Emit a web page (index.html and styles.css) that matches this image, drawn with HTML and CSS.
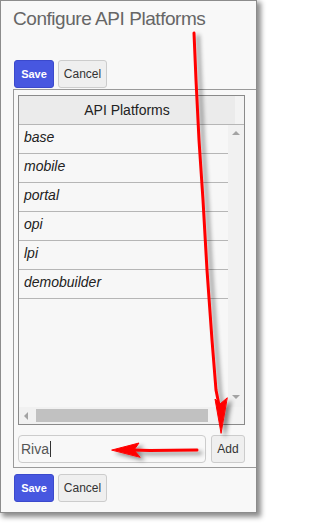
FILE: index.html
```html
<!DOCTYPE html>
<html>
<head>
<meta charset="utf-8">
<link rel="stylesheet" href="styles.css">
</head>
<body>
<div class="window">
  <h1 class="title">Configure API Platforms</h1>
  <div class="toolbar">
    <button class="btn primary">Save</button>
    <button class="btn">Cancel</button>
  </div>
  <div class="panel">
    <div class="grid">
      <div class="grid-head">
        <div class="head-cell">API Platforms</div>
        <div class="head-gap"></div>
      </div>
      <div class="grid-main">
        <div class="rows">
          <div class="row">base</div>
          <div class="row">mobile</div>
          <div class="row">portal</div>
          <div class="row">opi</div>
          <div class="row">lpi</div>
          <div class="row">demobuilder</div>
        </div>
        <div class="vscroll">
          <span class="arrow up"></span>
          <span class="arrow down"></span>
        </div>
      </div>
      <div class="grid-foot">
        <div class="hscroll">
          <span class="arrow left"></span>
          <span class="thumb"></span>
        </div>
        <div class="corner"></div>
      </div>
    </div>
    <div class="add-row">
      <div class="input">Riva<span class="caret"></span></div>
      <button class="btn add">Add</button>
    </div>
  </div>
  <div class="toolbar bottom">
    <button class="btn primary">Save</button>
    <button class="btn">Cancel</button>
  </div>
</div>
<svg class="annot" width="270" height="525" viewBox="0 0 270 525">
  <defs>
    <filter id="sh" x="-50%" y="-50%" width="200%" height="200%">
      <feDropShadow dx="4" dy="3" stdDeviation="2.2" flood-color="#000" flood-opacity="0.45"/>
    </filter>
  </defs>
  <g filter="url(#sh)" fill="#ff0000" stroke="#ff0000" stroke-linecap="round" stroke-linejoin="round">
    <path d="M194 33 L196 80 L199 140 L203 200 L207 270 L212 340 L216 390 L219 405" fill="none" stroke-width="3"/>
    <path d="M221 433 L215 399 L220 404 L227 398 Z" stroke-width="1"/>
    <path d="M197 450 L150 450.5 L132 450" fill="none" stroke-width="3"/>
    <path d="M112 450 L139 443 L134 450 L140 457 Z" stroke-width="1"/>
  </g>
</svg>
</body>
</html>
```

FILE: styles.css
```css
html, body {
  margin: 0;
  padding: 0;
  background: #ffffff;
}

body {
  width: 270px;
  height: 525px;
  position: relative;
  font-family: "Liberation Sans", Arial, sans-serif;
}

.window {
  box-sizing: border-box;
  width: 257px;
  height: 513px;
  border: 1px solid #8c8c8c;
  background: #f8f8f8;
  box-shadow: 3px 3px 5px 1px rgba(0, 0, 0, 0.45);
  overflow: hidden;
  display: flex;
  flex-direction: column;
}

.title {
  margin: 6px 0 0 12px;
  font-size: 19px;
  letter-spacing: -0.45px;
  line-height: 23px;
  font-weight: normal;
  color: #666666;
  white-space: nowrap;
}

.toolbar {
  display: flex;
  gap: 4px;
  margin: 30px 0 0 13px;
}

.toolbar.bottom {
  margin-top: 6px;
}

.btn {
  box-sizing: border-box;
  height: 28px;
  padding: 0;
  border: 1px solid #cccccc;
  border-radius: 3px;
  background: #efefef;
  color: #333333;
  font-family: "Liberation Sans", Arial, sans-serif;
  font-size: 12px;
  width: 49px;
  display: flex;
  align-items: center;
  justify-content: center;
}

.btn.primary {
  width: 40px;
  background: #4757e0;
  border-color: #3b49cc;
  color: #ffffff;
  font-weight: bold;
  font-size: 11px;
}

.btn.add {
  width: 34px;
  font-size: 12px;
}

.panel {
  flex: none;
  width: 260px;
  margin: 1px 0 0 12px;
  border: 1px solid #9a9a9a;
  padding: 5px 0 4px 4px;
  box-sizing: border-box;
}

.grid {
  box-sizing: border-box;
  width: 227px;
  height: 330px;
  border: 1px solid #8a8a8a;
  display: flex;
  flex-direction: column;
  background: #f7f7f7;
}

.grid-head {
  display: flex;
  height: 28px;
  border-bottom: 1px solid #b6b6b6;
  flex: none;
}

.head-cell {
  width: 216px;
  background: #ebebeb;
  text-align: center;
  font-size: 14px;
  line-height: 28px;
  color: #222222;
}

.head-gap {
  flex: 1;
  background: #f3f3f3;
}

.grid-main {
  flex: 1;
  display: flex;
  min-height: 0;
}

.rows {
  width: 209px;
}

.row {
  height: 25px;
  padding: 0 0 3px 5px;
  border-bottom: 1px solid #b6b6b6;
  font-size: 14px;
  line-height: 25px;
  font-style: italic;
  color: #222222;
}

.vscroll {
  flex: 1;
  background: #f1f1f1;
  display: flex;
  flex-direction: column;
  align-items: center;
  justify-content: space-between;
  padding: 6px 0 8px;
}

.arrow {
  display: block;
  width: 0;
  height: 0;
}

.arrow.up {
  border-left: 4px solid transparent;
  border-right: 4px solid transparent;
  border-bottom: 4px solid #a3a3a3;
}

.arrow.down {
  border-left: 4px solid transparent;
  border-right: 4px solid transparent;
  border-top: 4px solid #a3a3a3;
}

.arrow.left {
  border-top: 4px solid transparent;
  border-bottom: 4px solid transparent;
  border-right: 4px solid #a3a3a3;
}

.grid-foot {
  flex: none;
  height: 17px;
  display: flex;
}

.hscroll {
  width: 209px;
  background: #f1f1f1;
  display: flex;
  align-items: center;
  padding-left: 5px;
  box-sizing: border-box;
}

.thumb {
  display: block;
  width: 172px;
  height: 13px;
  margin-left: 8px;
  background: #c1c1c1;
}

.corner {
  flex: 1;
  background: #f3f3f3;
}

.add-row {
  display: flex;
  gap: 5px;
  margin-top: 10px;
}

.input {
  box-sizing: border-box;
  width: 188px;
  height: 28px;
  border: 1px solid #cccccc;
  border-radius: 4px;
  padding-left: 2px;
  font-size: 14px;
  line-height: 26px;
  color: #555555;
  display: flex;
  align-items: center;
}

.caret {
  display: block;
  width: 1px;
  height: 16px;
  margin-left: 1px;
  background: #333333;
}

.annot {
  position: absolute;
  left: 0;
  top: 0;
  pointer-events: none;
}
```
